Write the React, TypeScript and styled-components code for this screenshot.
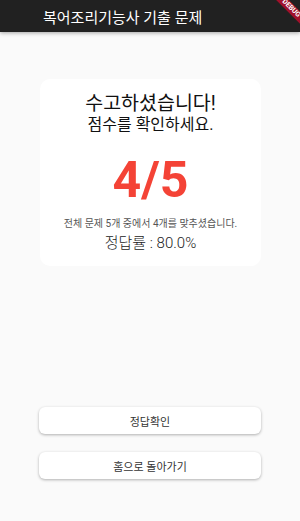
import React from 'react';
import styled, { createGlobalStyle } from 'styled-components';

const GlobalStyle = createGlobalStyle`
	html, body {
		margin: 0;
		padding: 0;
		background: #fafafa;
	}
	body {
		font-family: Roboto, "Noto Sans CJK KR", sans-serif;
	}
`;

const App = () => {
	return (
		<>
			<GlobalStyle />
			<Screen>
				<AppBar>
					<AppTitle>복어조리기능사 기출 문제</AppTitle>
				</AppBar>
				<Body>
					<ResultCard>
						<Title>수고하셨습니다!</Title>
						<Subtitle>점수를 확인하세요.</Subtitle>
						<Score>4/5</Score>
						<Detail>전체 문제 5개 중에서 4개를 맞추셨습니다.</Detail>
						<Rate>정답률 : 80.0%</Rate>
					</ResultCard>
					<Actions>
						<ActionButton>정답확인</ActionButton>
						<ActionButton>홈으로 돌아가기</ActionButton>
					</Actions>
				</Body>
				<DebugBanner>DEBUG</DebugBanner>
			</Screen>
		</>
	);
};

export default App;

const Screen = styled.div`
	position: relative;
	width: 300px;
	height: 521px;
	overflow: hidden;
	display: flex;
	flex-direction: column;
	background: #fafafa;
`;

const AppBar = styled.header`
	height: 32px;
	flex-shrink: 0;
	display: flex;
	align-items: center;
	padding-left: 43px;
	background: #212121;
	box-shadow: 0 1px 4px rgba(0, 0, 0, 0.35);
	z-index: 1;
`;

const AppTitle = styled.h1`
	margin: 0;
	font-size: 15px;
	font-weight: 400;
	color: #ffffff;
`;

const Body = styled.main`
	flex: 1;
	display: flex;
	flex-direction: column;
	padding: 47px 39px 42px 40px;
`;

const ResultCard = styled.section`
	display: flex;
	flex-direction: column;
	align-items: center;
	padding: 13px 0 14px;
	background: #ffffff;
	border-radius: 10px;
`;

const Title = styled.div`
	font-size: 19.5px;
	line-height: 23px;
	color: #111;
`;

const Subtitle = styled.div`
	font-size: 16px;
	line-height: 20px;
	color: #111;
`;

const Score = styled.div`
	margin-top: 17px;
	font-size: 50px;
	line-height: 56px;
	font-weight: 700;
	color: #f44336;
`;

const Detail = styled.div`
	margin-top: 9px;
	font-size: 10px;
	line-height: 14px;
	color: #555;
`;

const Rate = styled.div`
	margin-top: 3px;
	font-size: 15px;
	line-height: 18px;
	font-weight: 300;
	color: #222;
`;

const Actions = styled.div`
	margin-top: auto;
	display: flex;
	flex-direction: column;
	gap: 18px;
	margin-left: -1px;
`;

const ActionButton = styled.button`
	height: 27px;
	border: none;
	border-radius: 6px;
	background: #ffffff;
	box-shadow: 0 1px 3px rgba(0, 0, 0, 0.3);
	font-family: Roboto, "Noto Sans CJK KR", sans-serif;
	font-size: 11px;
	color: #333;
	cursor: pointer;
`;

const DebugBanner = styled.div`
	position: absolute;
	top: 4px;
	right: -26px;
	width: 70px;
	height: 9px;
	background: #a0112b;
	color: #fff;
	font-size: 7px;
	line-height: 9px;
	font-weight: 700;
	text-align: center;
	transform: rotate(45deg);
	z-index: 2;
`;
